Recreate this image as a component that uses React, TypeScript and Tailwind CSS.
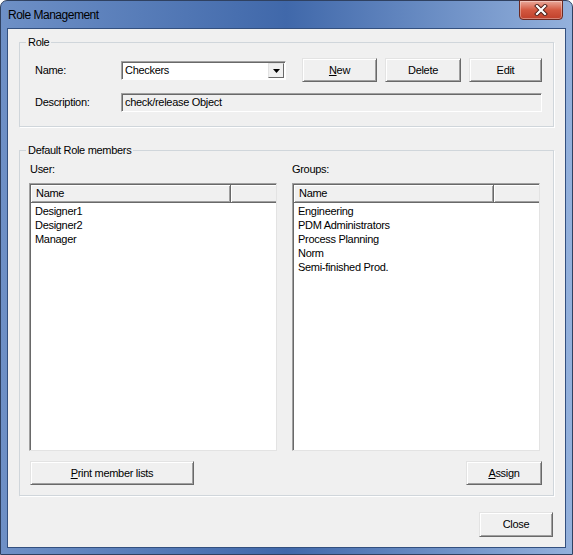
import { ReactNode } from "react";

const font = "font-['Liberation_Sans',Arial,sans-serif] text-[11px] tracking-[-0.3px] text-black";

function Btn({ children, className = "" }: { children: ReactNode; className?: string }) {
    return (
        <button
            className={`h-[24px] bg-[#f0f0f0] border border-t-[#e3e3e3] border-l-[#e3e3e3] border-r-[#696969] border-b-[#696969] shadow-[inset_1px_1px_0_#fff,inset_-1px_-1px_0_#a0a0a0] flex items-center justify-center ${className}`}
        >
            <span>{children}</span>
        </button>
    );
}

function Acc({ children }: { children: ReactNode }) {
    return <span className="underline underline-offset-[1px]">{children}</span>;
}

function GroupBox({ label, children, className = "" }: { label: string; children: ReactNode; className?: string }) {
    return (
        <fieldset className={`border border-[#d0d6db] shadow-[1px_1px_0_#fff] ${className}`}>
            <legend className="ml-[6px] px-[2px] leading-[14px]">{label}</legend>
            {children}
        </fieldset>
    );
}

function ListView({ items }: { items: string[] }) {
    return (
        <div className="h-[268px] bg-white border border-t-[#a0a0a0] border-l-[#a0a0a0] border-r-[#e3e3e3] border-b-[#e3e3e3] shadow-[inset_1px_1px_0_#696969]">
            <div className="flex h-[18px] ml-[1px] mt-[1px] bg-[#f0f0f0]">
                <div className="w-[200px] pl-[5px] leading-[16px] border-r border-b border-r-[#696969] border-b-[#696969] shadow-[inset_1px_1px_0_#fff,inset_-1px_-1px_0_#a0a0a0]">
                    Name
                </div>
                <div className="flex-1 border-b border-b-[#696969] shadow-[inset_1px_1px_0_#fff,inset_0_-1px_0_#a0a0a0]" />
            </div>
            <div className="pt-[1px] pl-[5px]">
                {items.map((item) => (
                    <div key={item} className="leading-[14px]">
                        {item}
                    </div>
                ))}
            </div>
        </div>
    );
}

export default function App() {
    return (
        <div className={`${font} w-[573px] h-[555px] flex flex-col rounded-t-[7px] border border-[#2f4161] bg-gradient-to-r from-[#6e90c6] via-[#4068aa] to-[#94b1dc]`}>
            {/* title bar */}
            <div className="h-[27px] flex justify-between pl-[7px] pr-[9px]">
                <div className="self-center pt-[1px] text-[12px] tracking-[-0.5px] text-black">Role Management</div>
                <div className="mt-[-1px] w-[44px] h-[20px] rounded-b-[4px] border border-[#6b2a22] bg-gradient-to-b from-[#e9a89a] via-[#d35840] to-[#c0402b] shadow-[inset_0_0_0_1px_rgba(255,255,255,0.35)] flex items-center justify-center">
                    <svg width="14" height="12" viewBox="0 0 14 12">
                        <path d="M3 2 L11 10 M11 2 L3 10" stroke="#4a1c16" strokeWidth="4" strokeLinecap="square" />
                        <path d="M3 2 L11 10 M11 2 L3 10" stroke="#fff" strokeWidth="2.2" strokeLinecap="square" />
                    </svg>
                </div>
            </div>

            {/* client area */}
            <div className="flex-1 mx-[6px] mb-[6px] border border-[#33507f] bg-[#f0f0f0] flex flex-col pt-[6px] px-[11px]">
                <GroupBox label="Role">
                    <div className="pl-[15px] pr-[10px] pt-[9px] pb-[14px]">
                        <div className="flex items-center">
                            <div className="w-[86px]">Name:</div>
                            <div className="w-[165px] h-[19px] flex items-center bg-white border border-t-[#a0a0a0] border-l-[#a0a0a0] border-r-white border-b-white shadow-[inset_1px_1px_0_#696969] pl-[3px] pr-[1px]">
                                <span className="flex-1">Checkers</span>
                                <div className="w-[16px] h-[15px] mt-[1px] bg-[#f0f0f0] border border-t-[#e3e3e3] border-l-[#e3e3e3] border-r-[#696969] border-b-[#696969] flex items-center justify-center">
                                    <svg width="7" height="4" viewBox="0 0 7 4">
                                        <path d="M0 0 H7 L3.5 4 Z" fill="#000" />
                                    </svg>
                                </div>
                            </div>
                            <div className="flex gap-[8px] ml-[16px]">
                                <Btn className="w-[75px]">
                                    <Acc>N</Acc>ew
                                </Btn>
                                <Btn className="w-[76px]">Delete</Btn>
                                <Btn className="w-[73px]">Edit</Btn>
                            </div>
                        </div>
                        <div className="flex items-center mt-[11px]">
                            <div className="w-[86px]">Description:</div>
                            <div className="w-[421px] h-[19px] flex items-center pl-[3px] bg-[#f0f0f0] border border-t-[#a0a0a0] border-l-[#a0a0a0] border-r-white border-b-white shadow-[inset_1px_1px_0_#696969]">
                                check/release Object
                            </div>
                        </div>
                    </div>
                </GroupBox>

                <GroupBox label="Default Role members" className="mt-[16px]">
                    <div className="pl-[9px] pr-[13px] pt-[6px] pb-[10px]">
                        <div className="grid grid-cols-2 gap-x-[15px]">
                            <div>
                                <div className="leading-[13px] pl-[1px] mb-[7px]">User:</div>
                                <ListView items={["Designer1", "Designer2", "Manager"]} />
                            </div>
                            <div>
                                <div className="leading-[13px] mb-[7px]">Groups:</div>
                                <ListView
                                    items={["Engineering", "PDM Administrators", "Process Planning", "Norm", "Semi-finished Prod."]}
                                />
                            </div>
                        </div>
                        <div className="flex justify-between mt-[10px]">
                            <Btn className="w-[164px] ml-[1px]">
                                <Acc>P</Acc>rint member lists
                            </Btn>
                            <Btn className="w-[76px] mr-[-2px]">
                                <Acc>A</Acc>ssign
                            </Btn>
                        </div>
                    </div>
                </GroupBox>

                <div className="flex justify-end mt-[16px] pr-[1px]">
                    <Btn className="w-[74px] h-[25px]">Close</Btn>
                </div>
            </div>
        </div>
    );
}
